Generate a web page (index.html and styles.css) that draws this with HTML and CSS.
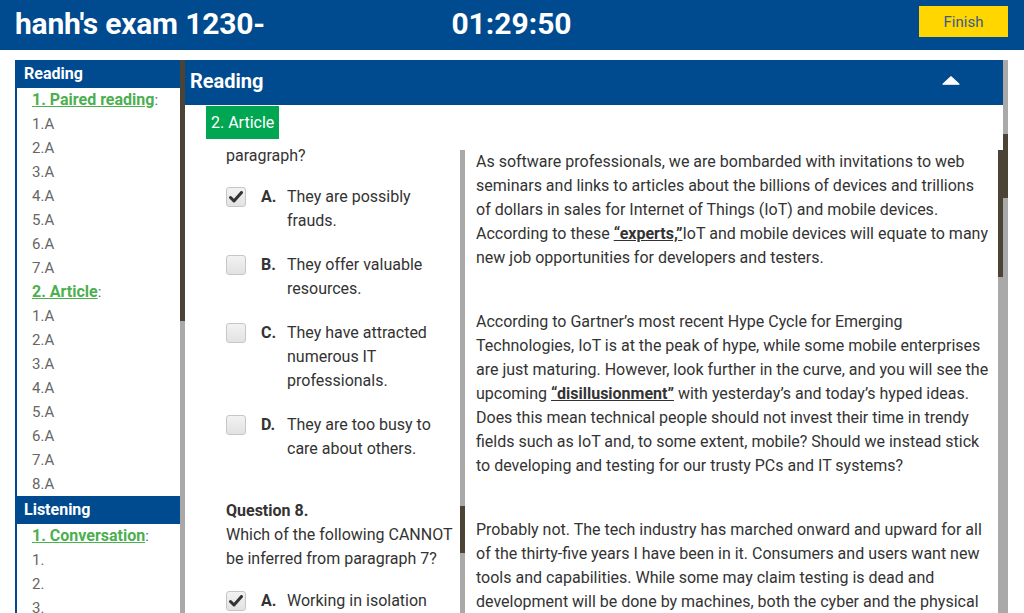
FILE: index.html
```html
<!DOCTYPE html>
<html>
<head>
<meta charset="utf-8">
<title>hanh's exam 1230-</title>
<link rel="stylesheet" href="styles.css">
</head>
<body>
<header class="topbar">
  <div class="exam-title">hanh's exam 1230-</div>
  <div class="timer">01:29:50</div>
  <div class="actions"><button class="finish">Finish</button></div>
</header>
<div class="page">
  <aside class="sidebar">
    <div class="side-content">
      <div class="side-head">Reading</div>
      <div class="side-item"><a class="side-link">1. Paired reading</a>:</div>
      <div class="side-item">1.A</div>
      <div class="side-item">2.A</div>
      <div class="side-item">3.A</div>
      <div class="side-item">4.A</div>
      <div class="side-item">5.A</div>
      <div class="side-item">6.A</div>
      <div class="side-item">7.A</div>
      <div class="side-item"><a class="side-link">2. Article</a>:</div>
      <div class="side-item">1.A</div>
      <div class="side-item">2.A</div>
      <div class="side-item">3.A</div>
      <div class="side-item">4.A</div>
      <div class="side-item">5.A</div>
      <div class="side-item">6.A</div>
      <div class="side-item">7.A</div>
      <div class="side-item">8.A</div>
      <div class="side-head">Listening</div>
      <div class="side-item"><a class="side-link">1. Conversation</a>:</div>
      <div class="side-item">1.</div>
      <div class="side-item">2.</div>
      <div class="side-item">3.</div>
      <div class="side-item">4.</div>
    </div>
    <div class="vscroll"><div class="thumb thumb-side"></div></div>
  </aside>

  <section class="main">
    <div class="main-head">
      <span class="main-title">Reading</span>
      <svg class="caret" width="18" height="9" viewBox="0 0 18 9"><path d="M1 8.2 L9 0.8 L17 8.2 Z" fill="#fff" stroke="#fff" stroke-width="1.2" stroke-linejoin="round"/></svg>
    </div>
    <div class="main-body">
      <div class="tag-row"><span class="tag">2. Article</span></div>
      <div class="panes">
        <div class="qpane">
          <div class="q-text">paragraph?</div>
          <div class="options">
            <div class="option">
              <span class="cbox checked"><svg width="14" height="12" viewBox="0 0 14 12"><path d="M1.5 6.5 L5 10 L12.5 1.5" fill="none" stroke="#333" stroke-width="3" stroke-linecap="round" stroke-linejoin="round"/></svg></span>
              <span class="opt-letter">A.</span>
              <span class="opt-text">They are possibly frauds.</span>
            </div>
            <div class="option">
              <span class="cbox"></span>
              <span class="opt-letter">B.</span>
              <span class="opt-text">They offer valuable resources.</span>
            </div>
            <div class="option">
              <span class="cbox"></span>
              <span class="opt-letter">C.</span>
              <span class="opt-text">They have attracted numerous IT professionals.</span>
            </div>
            <div class="option">
              <span class="cbox"></span>
              <span class="opt-letter">D.</span>
              <span class="opt-text">They are too busy to care about others.</span>
            </div>
          </div>
          <div class="question">
            <div class="q-title">Question 8.</div>
            <div class="q-text">Which of the following CANNOT be inferred from paragraph 7?</div>
            <div class="options">
              <div class="option">
                <span class="cbox checked"><svg width="14" height="12" viewBox="0 0 14 12"><path d="M1.5 6.5 L5 10 L12.5 1.5" fill="none" stroke="#333" stroke-width="3" stroke-linecap="round" stroke-linejoin="round"/></svg></span>
                <span class="opt-letter">A.</span>
                <span class="opt-text">Working in isolation is not sufficient.</span>
              </div>
            </div>
          </div>
        </div>
        <div class="vscroll pane-scroll"><div class="thumb thumb-q"></div></div>
        <div class="apane">
          <p>As software professionals, we are bombarded with invitations to web seminars and links to articles about the billions of devices and trillions of dollars in sales for Internet of Things (IoT) and mobile devices. According to these <b class="hl">“experts,”</b>IoT and mobile devices will equate to many new job opportunities for developers and testers.</p>
          <p>According to Gartner’s most recent Hype Cycle for Emerging Technologies, IoT is at the peak of hype, while some mobile enterprises are just maturing. However, look further in the curve, and you will see the upcoming <b class="hl">“disillusionment”</b> with yesterday’s and today’s hyped ideas. Does this mean technical people should not invest their time in trendy fields such as IoT and, to some extent, mobile? Should we instead stick to developing and testing for our trusty PCs and IT systems?</p>
          <p>Probably not. The tech industry has marched onward and upward for all of the thirty-five years I have been in it. Consumers and users want new tools and capabilities. While some may claim testing is dead and development will be done by machines, both the cyber and the physical worlds will keep needing people who can think critically.</p>
        </div>
        <div class="vscroll pane-scroll"><div class="thumb thumb-a"></div></div>
      </div>
    </div>
  </section>
  <div class="vscroll outer"><div class="thumb thumb-outer"></div></div>
</div>
</body>
</html>
```

FILE: styles.css
```css
* { box-sizing: border-box; }
html, body { margin: 0; padding: 0; }
body {
  font-family: Roboto, "Liberation Sans", Arial, sans-serif;
  background: #fff;
  color: #333;
  width: 1024px;
  height: 613px;
  overflow: hidden;
}

.topbar {
  height: 50px;
  background: #004a8f;
  display: grid;
  grid-template-columns: 1fr auto 1fr;
  align-items: center;
  padding: 0 16px 0 15px;
  color: #fff;
}
.exam-title {
  font-size: 30px;
  font-weight: 700;
  letter-spacing: -0.2px;
  margin-top: -3px;
}
.timer {
  font-size: 30px;
  font-weight: 700;
  margin-top: -3px;
}
.actions {
  display: flex;
  justify-content: flex-end;
  align-items: flex-start;
  align-self: start;
  padding-top: 6px;
}
.finish {
  width: 89px;
  height: 31px;
  border: none;
  background: #ffd600;
  color: #3a5a8c;
  font-family: Roboto, "Liberation Sans", Arial, sans-serif;
  font-size: 15px;
  padding: 0;
}

.page {
  display: flex;
  padding: 10px 0 0 15px;
  height: 563px;
  overflow: hidden;
}

.sidebar {
  width: 170px;
  display: flex;
  flex-shrink: 0;
  height: 553px;
}
.side-content {
  width: 165px;
  border-left: 2px solid #004a8f;
  overflow: hidden;
}
.side-head {
  height: 28px;
  background: #004a8f;
  color: #fff;
  font-weight: 700;
  font-size: 16px;
  line-height: 28px;
  padding-left: 9px;
  margin-left: -2px;
}
.side-item {
  height: 24px;
  line-height: 24px;
  padding-left: 15px;
  font-size: 15px;
  color: #666;
}
.side-link {
  color: #4caf50;
  font-weight: 700;
  font-size: 16px;
  text-decoration: underline;
}

.vscroll {
  width: 5px;
  flex-shrink: 0;
  background: #a9a9a9;
}
.thumb { background: #4b4336; width: 5px; }
.thumb-side { height: 261px; }
.outer { height: 553px; }
.thumb-outer { margin-top: 74px; height: 64px; }
.pane-scroll { margin-top: 11px; }
.thumb-a { height: 127px; }
.thumb-q { margin-top: 356px; height: 47px; }

.main {
  width: 818px;
  flex-shrink: 0;
  display: flex;
  flex-direction: column;
}
.main-head {
  height: 45px;
  background: #004a8f;
  display: flex;
  align-items: center;
  justify-content: space-between;
  padding: 0 43px 0 5px;
}
.main-title {
  color: #fff;
  font-size: 20px;
  font-weight: 700;
  margin-top: -3px;
}
.caret { display: block; margin-top: -4px; }

.main-body { flex: 1; display: flex; flex-direction: column; overflow: hidden; }
.tag-row { padding: 1px 0 0 21px; height: 34px; }
.tag {
  display: inline-block;
  background: #00a651;
  color: #fff;
  font-size: 16px;
  height: 33px;
  line-height: 33px;
  padding: 0 5px;
}

.panes { display: flex; flex: 1; overflow: hidden; }
.qpane {
  width: 275px;
  padding: 5px 5px 0 41px;
  font-size: 16px;
  line-height: 24px;
  overflow: hidden;
}
.q-text { margin-bottom: 17px; }
.question { margin-top: 38px; }
.q-title { font-weight: 700; }
.q-title + .q-text { margin-bottom: 18px; }
.option {
  display: flex;
  align-items: flex-start;
  margin-bottom: 20px;
}
.cbox {
  width: 20px;
  height: 20px;
  flex-shrink: 0;
  margin-top: 2px;
  border: 1px solid #c6c6c6;
  border-radius: 3px;
  background: linear-gradient(#f2f2f2, #e2e2e2);
  display: flex;
  align-items: center;
  justify-content: center;
}
.opt-letter {
  width: 26px;
  flex-shrink: 0;
  margin-left: 15px;
  font-weight: 700;
}
.opt-text { flex: 1; padding-right: 15px; }

.apane {
  width: 533px;
  padding: 11px 8px 0 11px;
  font-size: 16px;
  line-height: 24px;
  overflow: hidden;
}
.apane p { margin: 0 0 40px 0; }
.hl { text-decoration: underline; }
```
